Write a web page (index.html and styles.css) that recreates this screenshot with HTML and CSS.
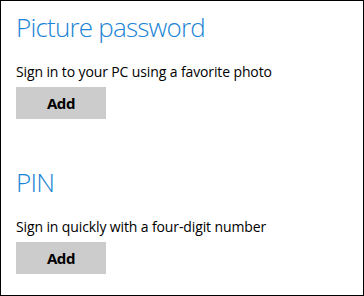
FILE: index.html
```html
<!DOCTYPE html>
<html>
<head>
<meta charset="utf-8">
<link rel="stylesheet" href="styles.css">
</head>
<body>
<div class="panel">
  <section class="group">
    <h2 class="title">Picture password</h2>
    <p class="desc">Sign in to your PC using a favorite photo</p>
    <button class="btn">Add</button>
  </section>
  <section class="group second">
    <h2 class="title">PIN</h2>
    <p class="desc">Sign in quickly with a four-digit number</p>
    <button class="btn">Add</button>
  </section>
</div>
</body>
</html>
```
FILE: styles.css
```css
html, body {
  margin: 0;
  padding: 0;
  background: #fff;
}
.panel {
  box-sizing: border-box;
  width: 364px;
  height: 296px;
  border: 1px solid #000;
  padding: 8px 15px 0 15px;
  display: flex;
  flex-direction: column;
  font-family: "Open Sans", "Noto Sans", sans-serif;
}
.group {
  display: flex;
  flex-direction: column;
  align-items: flex-start;
}
.second {
  margin-top: 45px;
}
.title {
  margin: 0;
  font-size: 26px;
  font-weight: 300;
  line-height: 36px;
  letter-spacing: -0.8px;
  color: #1a84d5;
}
.desc {
  margin: 17px 0 0 0;
  font-size: 14px;
  line-height: 20px;
  letter-spacing: -0.12px;
  color: #000;
}
.btn {
  margin-top: 5px;
  width: 90px;
  height: 32px;
  border: none;
  padding: 0;
  background: #cccccc;
  color: #000;
  font-family: "Open Sans", sans-serif;
  font-weight: 700;
  font-size: 15px;
  letter-spacing: -0.4px;
}
```
